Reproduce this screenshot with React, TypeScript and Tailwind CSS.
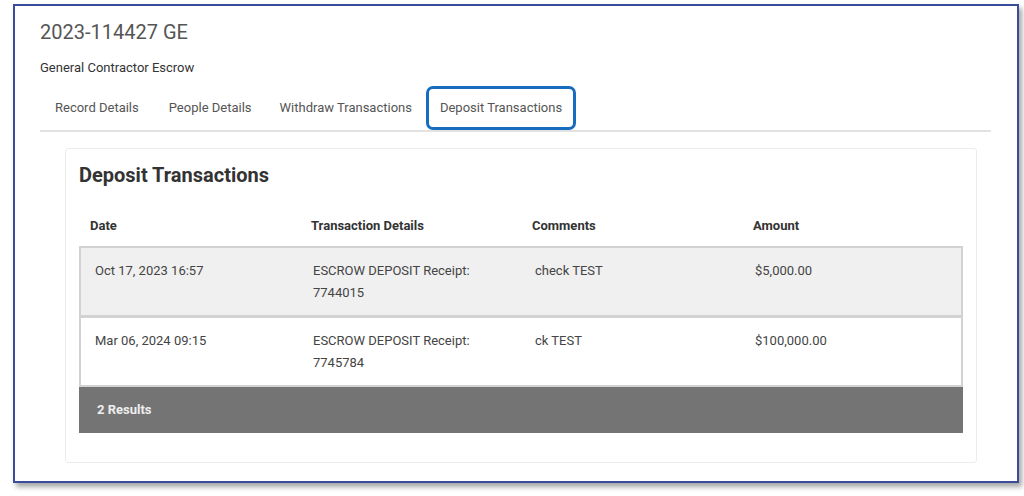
const tabs = ['Record Details', 'People Details', 'Withdraw Transactions', 'Deposit Transactions'];

const rows = [
  { date: 'Oct 17, 2023 16:57', details: ['ESCROW DEPOSIT Receipt:', '7744015'], comment: 'check TEST', amount: '$5,000.00', shaded: true },
  { date: 'Mar 06, 2024 09:15', details: ['ESCROW DEPOSIT Receipt:', '7745784'], comment: 'ck TEST', amount: '$100,000.00', shaded: false },
];

const tabClass = (tab: string) => {
  if (tab === 'Deposit Transactions') {
    return 'h-[44px] px-[14px] flex items-center text-[13px] text-[#555] rounded-[7px] ring-3 ring-inset ring-[#176cc0]';
  }
  if (tab === 'Withdraw Transactions') {
    return 'h-[44px] pl-[13px] pr-[14px] flex items-center text-[13px] text-[#555]';
  }
  return 'h-[44px] px-[15px] flex items-center text-[13px] text-[#555]';
};

const App = () => {
  return (
    <div className="w-[1024px] h-[496px] bg-white overflow-hidden" style={{ fontFamily: 'Roboto, "Liberation Sans", sans-serif' }}>
      <div className="ml-[13px] mt-[4px] w-[1006px] h-[479px] border-2 border-[#3a4d9c] bg-white shadow-[3px_4px_5px_rgba(0,0,0,0.35)]">
        <div className="pl-[25px] pr-[26px] pt-[14px]">
          <h1 className="text-[20px] leading-[24px] text-[#555]">2023-114427 GE</h1>
          <p className="mt-[16px] text-[13px] leading-[16px] text-[#333]">General Contractor Escrow</p>

          <div className="mt-[10px] flex border-b-2 border-[#e2e2e2]">
            {tabs.map((tab) => (
              <div key={tab} className={tabClass(tab)}>
                {tab}
              </div>
            ))}
          </div>

          <div className="ml-[25px] mt-[16px] w-[912px] h-[315px] border border-[#ececec] rounded-[3px] px-[13px] pt-[13px]">
            <h2 className="text-[20px] leading-[26px] font-bold text-[#333]">Deposit Transactions</h2>

            <div className="mt-[30px] grid grid-cols-4 text-[13px] leading-[16px] font-bold text-[#333]">
              <div className="px-[11px]">Date</div>
              <div className="px-[11px]">Transaction Details</div>
              <div className="px-[11px]">Comments</div>
              <div className="px-[11px]">Amount</div>
            </div>

            <div className="mt-[12px]">
              {rows.map((row) => (
                <div
                  key={row.date}
                  className={`grid grid-cols-4 border-2 border-[#d2d2d2] -mt-[1px] first:mt-0 pt-[12px] pb-[11px] text-[13px] leading-[22px] text-[#444] ${row.shaded ? 'bg-[#f0f0f0]' : 'bg-white'}`}
                >
                  <div className="pl-[14px]">{row.date}</div>
                  <div className="pl-[12px]">
                    {row.details.map((d) => (
                      <div key={d}>{d}</div>
                    ))}
                  </div>
                  <div className="pl-[14px]">{row.comment}</div>
                  <div className="pl-[14px]">{row.amount}</div>
                </div>
              ))}
              <div className="h-[46px] bg-[#747474] flex items-center px-[18px] text-[13px] font-bold text-[#eee]">2 Results</div>
            </div>
          </div>
        </div>
      </div>
    </div>
  );
};

export default App;
